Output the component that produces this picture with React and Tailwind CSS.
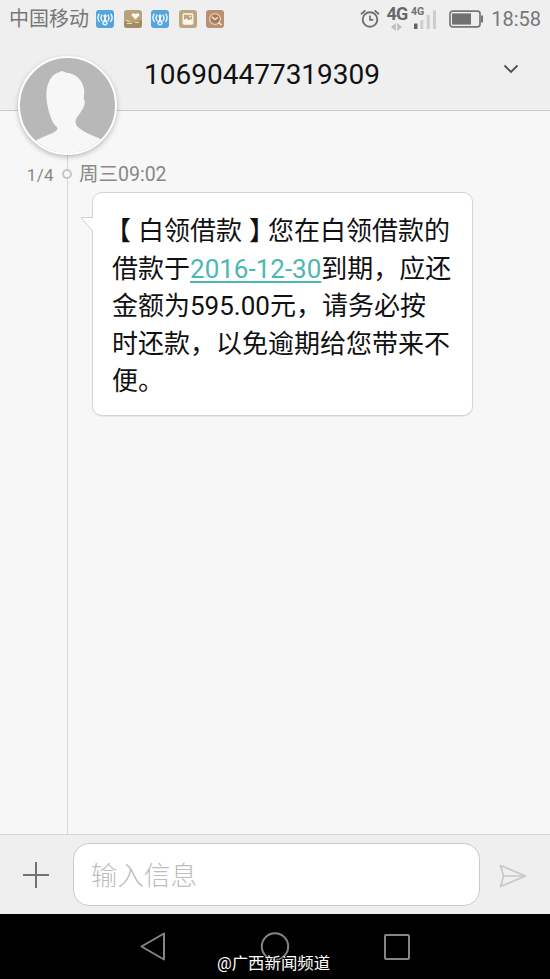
import React from 'react';

const messageLine = 'h-[37.5px] whitespace-nowrap';

function AntennaIcon() {
	return (
		<svg width="18" height="18" viewBox="0 0 18 18" fill="none">
			<rect width="18" height="18" rx="3" fill="#54a5dc" />
			<g stroke="#eaf6ff" strokeLinecap="round">
				<path d="M3.2 4.200c-1.6 2.200-1.6 5 0 7.200M14.800 4.200c1.6 2.200 1.6 5 0 7.200" strokeWidth="1.4" />
				<path d="M5.800 5.200c-1 1.600-1 3.600 0 5.200M12.200 5.200c1 1.600 1 3.600 0 5.200" strokeWidth="1.4" />
				<path d="M9 7v4.500" strokeWidth="2" />
				<circle cx="9" cy="6" r="1.2" fill="#eaf6ff" />
				<circle cx="9" cy="12.700" r="2" strokeWidth="1.4" />
			</g>
		</svg>
	);
}

function HeartIcon() {
	return (
		<svg width="18" height="18" viewBox="0 0 18 18" fill="none">
			<rect width="18" height="18" rx="3" fill="#b8a277" />
			<path d="M0 11l7 2 11-3v5a3 3 0 0 1-3 3H3a3 3 0 0 1-3-3z" fill="#a28d62" />
			<path d="M11.5 9.5L7.8 5.8c-1-2 1.8-3.7 3.7-1.5 1.9-2.2 4.7-.5 3.7 1.5z" fill="#fffaf0" />
			<path d="M2 10.5l4 1M3 13.5h5M11 12.5h4" stroke="#e8dcbd" />
		</svg>
	);
}

function PictureIcon() {
	return (
		<svg width="18" height="18" viewBox="0 0 18 18" fill="none">
			<rect width="18" height="18" rx="3" fill="#bba680" />
			<rect x="4.200" y="4" width="9.600" height="10" rx="1" stroke="#fff8e9" strokeWidth="1.3" />
			<path d="M4.5 10l3-1.600 2.200 1.800 4-1.500V14h-9.200z" fill="#fff8e9" />
			<circle cx="11.3" cy="6.6" r="1" fill="#fff8e9" />
		</svg>
	);
}

function ClockAppIcon() {
	return (
		<svg width="18" height="18" viewBox="0 0 18 18" fill="none">
			<rect width="18" height="18" rx="3" fill="#b99070" />
			<circle cx="9" cy="9" r="5.400" fill="#a87b5d" stroke="#e9d2bf" strokeWidth="1.2" />
			<path d="M5.800 6.700L9 9.400l2.800-2M12.500 12.500l3 2.500" stroke="#fff1e4" strokeWidth="1.2" />
		</svg>
	);
}

function StatusBar() {
	return (
		<div className="flex h-10 items-center justify-between pr-[9px] pl-[9px] text-[#777]">
			<div className="flex items-center pb-[3px]">
				<span className="w-[87px] pt-px text-[20px] leading-6">中国移动</span>
				<div className="flex gap-[9.5px]">
					<AntennaIcon />
					<HeartIcon />
					<AntennaIcon />
					<PictureIcon />
					<ClockAppIcon />
				</div>
			</div>
			<div className="flex items-center pb-[3px]">
				{/* alarm */}
				<svg className="mr-[7px]" width="20" height="20" viewBox="0 0 20 20" fill="none" stroke="#6f6f6f">
					<circle cx="10" cy="10.5" r="7.3" strokeWidth="1.9" />
					<path d="M10 6.500v4.300h3.300" strokeWidth="1.7" />
					<path d="M1 5.200L5.400 1.400M19 5.200l-4.400-3.800" strokeWidth="1.8" />
				</svg>
				<div className="mr-[4px] flex h-7 flex-col items-center">
					<span className="text-[18px] leading-[18px] font-bold tracking-[-1px] text-[#686868]">4G</span>
					<svg width="11" height="8" viewBox="0 0 11 8" fill="#bdbdbd">
						<path d="M4.800 0v8L0 4zM6.200 0v8L11 4z" />
					</svg>
				</div>
				<svg className="mr-3" width="26" height="28" viewBox="0 0 26 28">
					<text x="0" y="9.500" fontSize="10.500" fontWeight="700" fill="#707070">4G</text>
					<path d="M3 18.500h3.500V24H3z" fill="#646464" />
					<path d="M9.300 15h3v9h-3zM15.700 10h3v14h-3zM22 5.500h3V24h-3z" fill="#cdcdcd" />
				</svg>
				<svg className="mr-[7px]" width="35" height="18" viewBox="0 0 35 18" fill="none">
					<rect x="1" y="1.200" width="30" height="15.600" rx="2.500" stroke="#777" strokeWidth="1.7" />
					<rect x="3" y="3.400" width="19" height="11.200" fill="#707070" />
					<path d="M32 5.500h2v7h-2z" fill="#777" />
				</svg>
				<span className="pt-px text-[20px] leading-6">18:58</span>
			</div>
		</div>
	);
}

function Avatar() {
	return (
		<div className="absolute top-[56px] left-[18px] z-10 size-[99px] overflow-hidden rounded-full border-2 border-white bg-[#b8b8b8] shadow-[0_2px_5px_rgba(0,0,0,0.25)]">
			<svg width="95" height="95" viewBox="0 0 95 95" fill="#f7f7f7">
				<path d="M41.500 13c2 0 3 1.500 5 1.700C56 15.500 62.500 22 64 31c.6 4-.3 7.500-.2 11 1.500.2 1.400 2.500.2 6-.8 2.500-2 3.500-3 5.500-2 4-5.500 6.500-5.500 11 .5 5 9 9.500 17 13 4 1.800 7 2.500 10 5V100H15V83.500c3-3 8-4.500 13-6.500 5-2.200 9-3.500 9.500-6.500.2-2-3.500-3-5-7-2-4.500-5.500-14-6-23C26 30 28 23 33 17.500c2-2.200 5-2.500 8.500-4.500z" />
			</svg>
		</div>
	);
}

function Header() {
	return (
		<header className="h-[111px] border-b border-[#cacaca] bg-[#efefef]">
			<StatusBar />
			<div className="flex h-[66px] items-center justify-between pr-[31px] pl-[144px]">
				<h1 className="pt-[3px] text-[28px] leading-8 text-[#111]">106904477319309</h1>
				<svg className="mb-2" width="16" height="10" viewBox="0 0 16 10" fill="none" stroke="#505050" strokeWidth="1.8">
					<path d="M1.500 1.500L8 8l6.500-6.500" />
				</svg>
			</div>
		</header>
	);
}

function Message() {
	return (
		<div className="relative h-[224px] w-[381px] rounded-[10px] border border-[#d4d4d4] bg-white pt-[20px] pl-[19px] text-[26px] leading-[37.5px] text-[#111] shadow-[0_1px_1px_rgba(0,0,0,0.06)]">
			{/* bubble tail */}
			<svg className="absolute top-[23px] -left-[13px]" width="15" height="18" viewBox="0 0 15 18" fill="#fff">
				<path d="M14 1.500H1L12.500 15H14z" />
				<path d="M12.500 1.500H1L12.500 15" fill="none" stroke="#d0d0d0" />
			</svg>
			<p className={messageLine}>
				<span className="mr-[7px] ml-[6px] [font-feature-settings:'halt']">【</span>白领借款
				<span className="mr-[6px] ml-[7px] [font-feature-settings:'halt']">】</span>您在白领借款的
			</p>
			<p className={messageLine}>
				借款于<a className="text-[#4bb9b1] underline decoration-[1.5px] underline-offset-[3px]">2016-12-30</a>到期，应还
			</p>
			<p className={messageLine}>金额为595.00元，请务必按</p>
			<p className={messageLine}>时还款，以免逾期给您带来不</p>
			<p className={messageLine}>便。</p>
		</div>
	);
}

function Conversation() {
	return (
		<main className="flex flex-1 bg-[#f7f7f7]">
			<div className="flex w-[68px] justify-end border-r border-[#d6d6d6] pt-[53px] pr-[13px] text-[17px] leading-[22px] tracking-[0.4px] text-[#888]">
				1/4
			</div>
			<div className="flex-1">
				<div className="flex h-[81px] items-end pb-[5px]">
					<div className="mb-[8px] -ml-[6px] size-[10px] rounded-full border-2 border-[#c5c5c5] bg-[#f7f7f7]" />
					<span className="ml-[7px] text-[19.5px] leading-6 text-[#888]">周三09:02</span>
				</div>
				<div className="pl-6">
					<Message />
				</div>
			</div>
		</main>
	);
}

function Composer() {
	return (
		<footer className="flex h-[80px] items-center border-t border-[#d8d8d8] bg-[#efefef] pl-[23px]">
			<svg width="26" height="26" viewBox="0 0 26 26" stroke="#727272" strokeWidth="2">
				<path d="M13 0v26M0 13h26" />
			</svg>
			<div className="ml-6 flex h-[63px] w-[407px] items-center rounded-[16px] border border-[#cbcbcb] bg-white pt-[3px] pl-[17px] text-[26.5px] font-light text-[#bdbdbd]">
				输入信息
			</div>
			<svg className="mt-[3px] ml-[19px]" width="28" height="24" viewBox="0 0 28 24" fill="none" stroke="#c8c8c8" strokeWidth="1.7">
				<path d="M1.500 1.500L26.500 12 1.500 22.500 4.500 12zM4.500 12h22" strokeLinejoin="round" />
			</svg>
		</footer>
	);
}

function NavBar() {
	return (
		<nav className="relative flex h-[65px] justify-between bg-black pt-[17px] pr-[139px] pl-[139px]">
			<svg width="28" height="32" viewBox="0 0 28 32" fill="none" stroke="#858585" strokeWidth="2" strokeLinejoin="round">
				<path d="M25 2.500v26L2.500 15.500z" />
			</svg>
			<svg width="30" height="32" viewBox="0 0 30 32" fill="none" stroke="#858585" strokeWidth="2">
				<circle cx="15" cy="15.500" r="13.200" />
			</svg>
			<svg width="28" height="32" viewBox="0 0 28 32" fill="none" stroke="#858585" strokeWidth="2">
				<rect x="2" y="4" width="24" height="24" rx="1" />
			</svg>
			<span className="absolute top-[38px] left-[217px] text-[16.4px] leading-6 whitespace-nowrap text-white [text-shadow:0_0_2px_#000,1px_1px_1px_#000]">
				@广西新闻频道
			</span>
		</nav>
	);
}

export default function App() {
	return (
		<div lang="zh-CN" className="relative flex h-[979px] w-[550px] flex-col overflow-hidden font-['Roboto','Noto_Sans_CJK_SC',sans-serif]">
			<Header />
			<Avatar />
			<Conversation />
			<Composer />
			<NavBar />
		</div>
	);
}
